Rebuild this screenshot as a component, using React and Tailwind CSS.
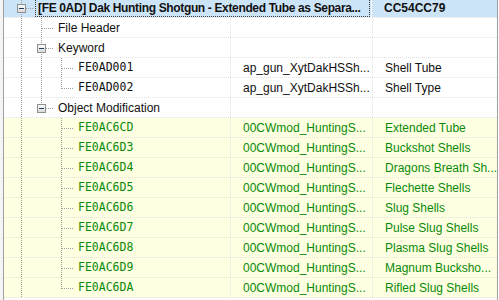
import React from 'react';

const mods = [
  ['FE0AC6CD', 'Extended Tube'],
  ['FE0AC6D3', 'Buckshot Shells'],
  ['FE0AC6D4', 'Dragons Breath Sh...'],
  ['FE0AC6D5', 'Flechette Shells'],
  ['FE0AC6D6', 'Slug Shells'],
  ['FE0AC6D7', 'Pulse Slug Shells'],
  ['FE0AC6D8', 'Plasma Slug Shells'],
  ['FE0AC6D9', 'Magnum Bucksho...'],
  ['FE0AC6DA', 'Rifled Slug Shells'],
];

const rows = [
  { anc: [], box: true, text: '[FE 0AD] Dak Hunting Shotgun - Extended Tube as Separa...', c3: 'CC54CC79', root: true },
  { anc: [true], text: 'File Header' },
  { anc: [true], box: true, text: 'Keyword' },
  { anc: [true, true], text: 'FE0AD001', mono: true, c2: 'ap_gun_XytDakHSSh...', c3: 'Shell Tube' },
  { anc: [true, true], last: true, text: 'FE0AD002', mono: true, c2: 'ap_gun_XytDakHSSh...', c3: 'Shell Type' },
  { anc: [true], box: true, last: true, text: 'Object Modification' },
  ...mods.map(([id, name], i) => ({
    anc: [true, false], last: i === mods.length - 1, text: id, mono: true,
    c2: '00CWmod_HuntingS...', c3: name, mod: true,
  })),
];

const dot = { stroke: '#a0a0a0', strokeDasharray: '1 1', shapeRendering: 'crispEdges' };

function Guide({ on }) {
  return (
    <svg width="20" height="20" className="shrink-0 self-start">
      {on && <line x1="10.5" y1="0" x2="10.5" y2="20" {...dot} />}
    </svg>
  );
}

function Joint({ box, last, id }) {
  return (
    <svg width="27" height="20" className="shrink-0 self-start">
      <defs>
        <linearGradient id={id} x1="0" y1="0" x2="0" y2="1">
          <stop offset="0" stopColor="#ffffff" />
          <stop offset="1" stopColor="#d8d8d8" />
        </linearGradient>
      </defs>
      <line x1="10.5" y1="0" x2="10.5" y2={last ? 11 : 20} {...dot} />
      <line x1={box ? 15 : 11} y1="10.5" x2="23" y2="10.5" {...dot} />
      {box && (
        <>
          <rect x="6.5" y="6.5" width="8" height="8" fill={`url(#${id})`} stroke="#8e8f8f" shapeRendering="crispEdges" />
          <line x1="8" y1="10.5" x2="13" y2="10.5" stroke="#253b5a" shapeRendering="crispEdges" />
        </>
      )}
    </svg>
  );
}

function Row({ r, i }) {
  const color = r.mod ? 'text-[#0a8a0a]' : 'text-[#111]';
  const sans = "font-['Liberation_Sans',Arial,sans-serif] text-[12px]";
  const label = (
    <span className={`whitespace-nowrap ${r.mono ? "font-['DejaVu_Sans_Mono',monospace] text-[11.5px]" : sans} ${color}`}>
      {r.text}
    </span>
  );
  const tree = (
    <>
      <div className="w-[7px] shrink-0" />
      {r.anc.map((on, k) => <Guide key={k} on={on} />)}
      <Joint box={r.box} last={r.last} id={`g${i}`} />
    </>
  );

  if (r.root) {
    return (
      <div className="flex h-[20px] border-b border-dotted border-[#e2e2e2]">
        <div className="flex w-[368px] shrink-0 items-stretch border-r border-white bg-[#cce4f7]">
          {tree}
          <div className="-ml-[3px] mr-[1px] flex flex-1 items-center overflow-hidden border border-dotted border-[#3a3a3a] pl-[2px]">
            <span className={`${sans} whitespace-nowrap font-bold tracking-[-0.35px] text-[#111]`}>{r.text}</span>
          </div>
        </div>
        <div className={`flex flex-1 items-center bg-[#cce4f7] pl-[12px] ${sans} font-bold text-[#111]`}>{r.c3}</div>
      </div>
    );
  }

  return (
    <div className={`flex h-[20px] border-b border-dotted border-[#e2e2e2] ${r.mod ? 'bg-[#ffffe1]' : 'bg-white'}`}>
      <div className="flex w-[227px] shrink-0 items-center border-r border-dotted border-[#e2e2e2]">
        {tree}
        <div className="flex items-center">{label}</div>
      </div>
      <div className={`flex w-[142px] shrink-0 items-center border-r border-dotted border-[#e2e2e2] pl-[12px] ${sans} ${color}`}>
        {r.c2}
      </div>
      <div className={`flex flex-1 items-center pl-[12px] whitespace-nowrap ${sans} ${color}`}>{r.c3}</div>
    </div>
  );
}

export default function App() {
  return (
    <div className="flex h-[300px] w-[499px] overflow-hidden bg-white">
      <div className="w-[3px] shrink-0 bg-[#f4f4f4]" />
      <div className="w-px shrink-0 bg-[#a0a0a0]" />
      <div className="flex-1 overflow-hidden">
        <div className="-mt-[2px]">
          {rows.map((r, i) => <Row key={i} r={r} i={i} />)}
        </div>
      </div>
      <div className="w-px shrink-0 bg-[#a0a0a0]" />
      <div className="w-px shrink-0 bg-white" />
    </div>
  );
}
